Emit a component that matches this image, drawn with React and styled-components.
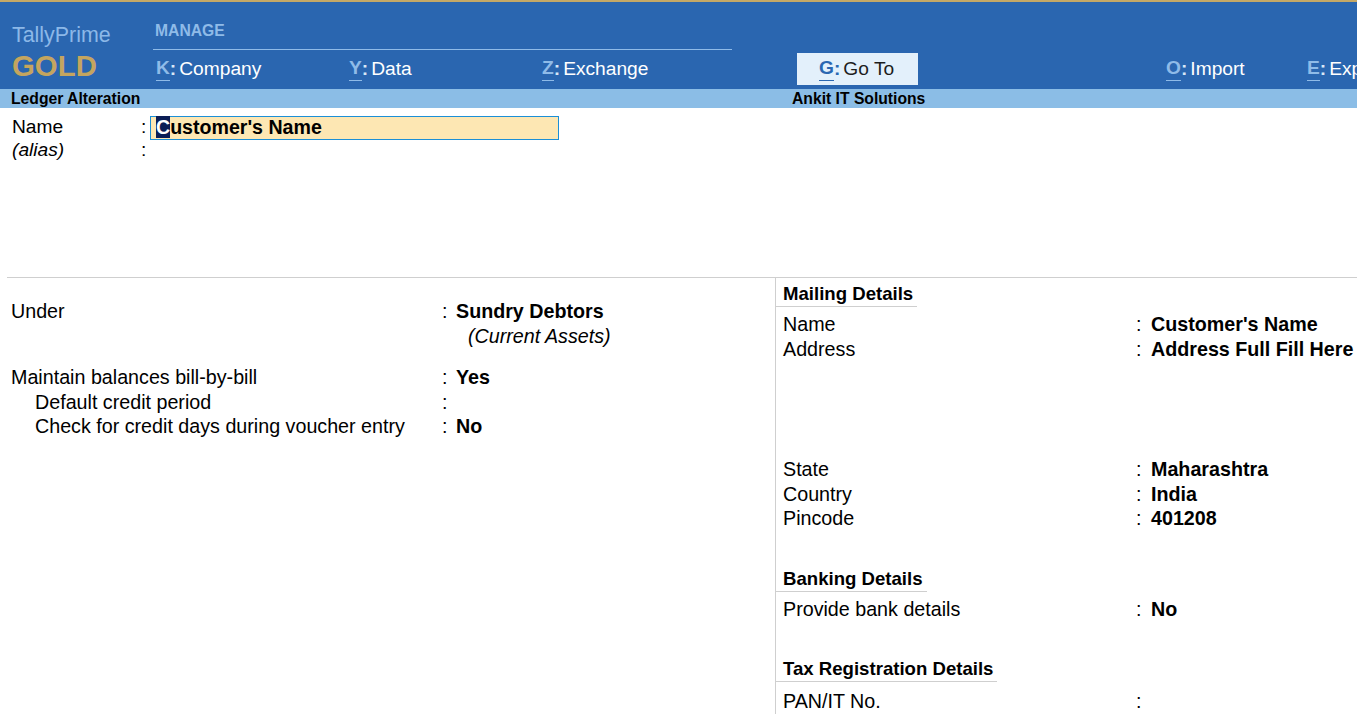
import React from 'react';
import styled, { createGlobalStyle, css } from 'styled-components';

const GlobalStyle = createGlobalStyle`
    html, body {
        margin: 0;
        padding: 0;
        background: #ffffff;
    }

    body {
        font-family: 'Liberation Sans', Arial, sans-serif;
        color: #000000;
    }
`;

const Page = styled.div`
    width: 1357px;
    height: 714px;
    overflow: hidden;
    display: flex;
    flex-direction: column;
    white-space: nowrap;
`;

const GoldStripe = styled.div`
    height: 2px;
    background: #c4a866;
    flex-shrink: 0;
`;

const Header = styled.header`
    height: 87px;
    background: #2a66b0;
    display: flex;
    flex-shrink: 0;
    overflow: hidden;
`;

const Brand = styled.div`
    width: 141px;
    padding: 21px 0 0 12px;
    display: flex;
    flex-direction: column;
    flex-shrink: 0;
`;

const BrandName = styled.div`
    font-size: 21.4px;
    line-height: 24px;
    color: #8cb8e8;
`;

const BrandEdition = styled.div`
    margin-top: 3px;
    font-size: 29.4px;
    line-height: 32px;
    font-weight: bold;
    color: #c4a55f;
`;

const NavColumn = styled.nav`
    flex: 1;
    min-width: 0;
    display: flex;
    flex-direction: column;
`;

const ManageLabel = styled.div`
    width: 577px;
    padding: 20px 0 9px 2px;
    font-size: 15.7px;
    line-height: 18px;
    font-weight: bold;
    color: #8fbbe8;
    border-bottom: 1px solid #8fbbe8;
`;

const MenuRow = styled.div`
    margin-top: 3px;
    height: 32px;
    display: flex;
    align-items: center;
`;

const MenuItem = styled.div`
    width: ${({ width }) => width}px;
    margin-left: ${({ offset }) => offset || 0}px;
    display: flex;
    align-items: center;
    font-size: 19.2px;
    line-height: 22px;
    color: #ffffff;
    flex-shrink: 0;

    ${({ active }) =>
        active &&
        css`
            height: 32px;
            padding-left: 22px;
            box-sizing: border-box;
            background: #e3f0fb;
            color: #1d1d1d;
        `}
`;

const KeyLetter = styled.span`
    display: inline-block;
    font-weight: bold;
    line-height: 22px;
    padding-bottom: 1px;
    color: ${({ active }) => (active ? '#2a67b1' : '#8fbbe8')};
    border-bottom: 1.5px solid ${({ active }) => (active ? '#2a67b1' : '#8fbbe8')};
`;

const KeyColon = styled.span`
    font-weight: bold;
    color: ${({ active }) => (active ? '#2a67b1' : '#d9e7f7')};
    margin-right: 3px;
`;

const TitleBar = styled.div`
    height: 19px;
    background: #8bbde6;
    display: flex;
    align-items: center;
    flex-shrink: 0;
    font-size: 15.7px;
    line-height: 19px;
    font-weight: bold;
`;

const TitleText = styled.div`
    width: ${({ width }) => width || 'auto'};
    padding-left: 11px;
    box-sizing: border-box;
    flex-shrink: 0;
`;

const TopSection = styled.section`
    height: 169px;
    padding-top: 6px;
    box-sizing: border-box;
    flex-shrink: 0;
`;

const NameRow = styled.div`
    display: grid;
    grid-template-columns: 129px 9px 409px;
    align-items: center;
    height: 24px;
    padding-left: 12px;
    font-size: 19.2px;
`;

const NameLabel = styled.span`
    font-style: ${({ italic }) => (italic ? 'italic' : 'normal')};
`;

const NameInput = styled.div`
    height: 24px;
    box-sizing: border-box;
    margin-top: 2px;
    background: #fde7b3;
    border: 1px solid #1c8fd6;
    padding-left: 5px;
    font-size: 19.6px;
    line-height: 21px;
    font-weight: bold;
`;

const Cursor = styled.span`
    background: #0b1d55;
    color: #ffffff;
`;

const Body = styled.main`
    flex: 1;
    display: flex;
    margin-left: 7px;
    border-top: 1px solid #cfcfcf;
`;

const LeftPane = styled.div`
    width: 769px;
    padding: 21px 0 0 4px;
    box-sizing: border-box;
    border-right: 1px solid #cfcfcf;
    flex-shrink: 0;
`;

const RightPane = styled.div`
    flex: 1;
    min-width: 0;
    padding-top: 3px;
`;

const FieldRow = styled.div`
    display: grid;
    grid-template-columns: ${({ labelWidth }) => labelWidth}px ${({ colonWidth }) => colonWidth}px 1fr;
    height: 24.5px;
    line-height: 24.5px;
    font-size: 19.7px;
    padding-left: ${({ pad }) => pad || 0}px;
    margin-top: ${({ gap }) => gap || 0}px;
`;

const FieldLabel = styled.span`
    padding-left: ${({ indent }) => (indent ? 24 : 0)}px;
`;

const FieldValue = styled.span`
    font-weight: ${({ italic }) => (italic ? 'normal' : 'bold')};
    font-style: ${({ italic }) => (italic ? 'italic' : 'normal')};
    padding-left: ${({ italic }) => (italic ? 12 : 0)}px;
`;

const SectionHeading = styled.div`
    display: inline-block;
    padding: 0 4px 0 7px;
    margin-top: ${({ gap }) => gap || 0}px;
    margin-bottom: 5px;
    font-size: 18.6px;
    line-height: 25px;
    font-weight: bold;
    border-bottom: 1px solid #cfcfcf;
`;

const menu = [
    { key: 'K', label: 'Company', width: 193, offset: 3 },
    { key: 'Y', label: 'Data', width: 193 },
    { key: 'Z', label: 'Exchange', width: 255 },
    { key: 'G', label: 'Go To', width: 121, active: true },
    { key: 'O', label: 'Import', width: 141, offset: 248 },
    { key: 'E', label: 'Export', width: 141 },
];

const leftFields = [
    { label: 'Under', value: 'Sundry Debtors' },
    { label: '', value: '(Current Assets)', italic: true, noColon: true },
    { label: 'Maintain balances bill-by-bill', value: 'Yes', gap: 17 },
    { label: 'Default credit period', value: '', indent: true },
    { label: 'Check for credit days during voucher entry', value: 'No', indent: true },
];

const Field = ({ label, value, italic, indent, noColon, gap, right }) => (
    <FieldRow
        labelWidth={right ? 353 : 431}
        colonWidth={right ? 15 : 14}
        pad={right ? 7 : 0}
        gap={gap}
    >
        <FieldLabel indent={indent}>{label}</FieldLabel>
        <span>{noColon ? '' : ':'}</span>
        <FieldValue italic={italic}>{value}</FieldValue>
    </FieldRow>
);

const App = () => (
    <>
        <GlobalStyle />
        <Page>
            <GoldStripe />
            <Header>
                <Brand>
                    <BrandName>TallyPrime</BrandName>
                    <BrandEdition>GOLD</BrandEdition>
                </Brand>
                <NavColumn>
                    <ManageLabel>MANAGE</ManageLabel>
                    <MenuRow>
                        {menu.map((item) => (
                            <MenuItem key={item.key} width={item.width} offset={item.offset} active={item.active}>
                                <KeyLetter active={item.active}>{item.key}</KeyLetter>
                                <KeyColon active={item.active}>:</KeyColon>
                                {item.label}
                            </MenuItem>
                        ))}
                    </MenuRow>
                </NavColumn>
            </Header>
            <TitleBar>
                <TitleText width="781px">Ledger Alteration</TitleText>
                <TitleText>Ankit IT Solutions</TitleText>
            </TitleBar>
            <TopSection>
                <NameRow>
                    <NameLabel>Name</NameLabel>
                    <span>:</span>
                    <NameInput>
                        <Cursor>C</Cursor>ustomer's Name
                    </NameInput>
                </NameRow>
                <NameRow>
                    <NameLabel italic>(alias)</NameLabel>
                    <span>:</span>
                    <span />
                </NameRow>
            </TopSection>
            <Body>
                <LeftPane>
                    {leftFields.map((field, i) => (
                        <Field key={i} {...field} />
                    ))}
                </LeftPane>
                <RightPane>
                    <SectionHeading>Mailing Details</SectionHeading>
                    <Field right label="Name" value="Customer's Name" />
                    <Field right label="Address" value="Address Full Fill Here" />
                    <Field right label="State" value="Maharashtra" gap={96} />
                    <Field right label="Country" value="India" />
                    <Field right label="Pincode" value="401208" />
                    <div>
                        <SectionHeading gap={35}>Banking Details</SectionHeading>
                    </div>
                    <Field right label="Provide bank details" value="No" />
                    <div>
                        <SectionHeading gap={35}>Tax Registration Details</SectionHeading>
                    </div>
                    <Field right label="PAN/IT No." value="" gap={2} />
                </RightPane>
            </Body>
        </Page>
    </>
);

export default App;
